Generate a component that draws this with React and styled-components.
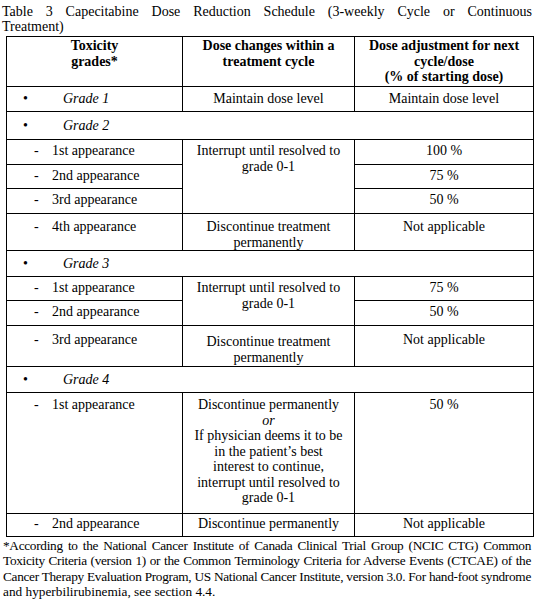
import React from "react";
import styled, { createGlobalStyle } from "styled-components";

const GlobalStyle = createGlobalStyle`
  html, body {
    margin: 0;
    padding: 0;
    background: #fff;
  }
  body {
    font-family: "Liberation Serif", "Times New Roman", serif;
    font-size: 14px;
    color: #000;
  }
`;

const Page = styled.div`
  width: 530px;
  padding: 4px 2px 0 2px;
  font-family: "Liberation Serif", "Times New Roman", serif;
`;

const Caption = styled.div`
  margin: 0 0 2px 0;
  line-height: 15px;
`;

/* one printed line of a justified paragraph, broken where the source breaks */
const Line = styled.span`
  display: block;
  white-space: nowrap;
  text-align: ${(p) => (p.$last ? "left" : "justify")};
  text-align-last: ${(p) => (p.$last ? "left" : "justify")};
`;

const NoteLine = styled(Line)`
  letter-spacing: ${(p) => (p.$last ? 0 : -0.3)}px;
  word-spacing: ${(p) => (p.$last ? 0 : -1.5)}px;
`;

const Table = styled.table`
  margin-left: 4px;
  width: 527px;
  border-collapse: collapse;
  table-layout: fixed;
  font: inherit;
`;

const Row = styled.tr`
  height: ${(p) => p.$h}px;
`;

const HeadCell = styled.th`
  border: 1px solid #000;
  padding: 1px 4px 0 4px;
  font-weight: 700;
  line-height: 15.7px;
  text-align: center;
  vertical-align: top;
`;

const Cell = styled.td`
  border: 1px solid #000;
  padding: ${(p) => (p.$mid ? 0 : p.$pt ?? 3)}px 4px 0 4px;
  line-height: ${(p) => p.$lh || 15.5}px;
  text-align: ${(p) => (p.$left ? "left" : "center")};
  vertical-align: ${(p) => (p.$mid ? "middle" : "top")};
  overflow: hidden;
`;

const Bullet = styled.span`
  display: inline-block;
  width: 40px;
  margin-left: 12px;
`;

const GradeLabel = styled.span`
  font-style: italic;
`;

const Dash = styled.span`
  display: inline-block;
  width: 18px;
  margin-left: 23px;
`;

const Or = styled.div`
  font-style: italic;
`;

const Footnote = styled.div`
  margin: 1px 0 0 1px;
  width: 528px;
  font-size: 13.3px;
  line-height: 15.4px;
`;

function GradeRow({ label, h }) {
  return (
    <Row $h={h}>
      <Cell colSpan={3} $left $mid>
        <Bullet>•</Bullet>
        <GradeLabel>{label}</GradeLabel>
      </Cell>
    </Row>
  );
}

function Appear({ children }) {
  return (
    <>
      <Dash>-</Dash>
      {children}
    </>
  );
}

export default function App() {
  return (
    <Page>
      <GlobalStyle />
      <Caption>
        <Line>Table 3 Capecitabine Dose Reduction Schedule (3-weekly Cycle or Continuous</Line>
        <Line $last>Treatment)</Line>
      </Caption>
      <Table>
        <colgroup>
          <col style={{ width: 176 }} />
          <col style={{ width: 172 }} />
          <col style={{ width: 179 }} />
        </colgroup>
        <thead>
          <Row $h={50}>
            <HeadCell>
              Toxicity
              <br />
              grades*
            </HeadCell>
            <HeadCell>
              Dose changes within a
              <br />
              treatment cycle
            </HeadCell>
            <HeadCell>
              Dose adjustment for next
              <br />
              cycle/dose
              <br />
              (% of starting dose)
            </HeadCell>
          </Row>
        </thead>
        <tbody>
          <Row $h={25}>
            <Cell $left $mid>
              <Bullet>•</Bullet>
              <GradeLabel>Grade 1</GradeLabel>
            </Cell>
            <Cell $mid>Maintain dose level</Cell>
            <Cell $mid>Maintain dose level</Cell>
          </Row>

          <GradeRow label="Grade 2" h={28} />
          <Row $h={25}>
            <Cell $left>
              <Appear>1st appearance</Appear>
            </Cell>
            <Cell rowSpan={3}>
              Interrupt until resolved to
              <br />
              grade 0-1
            </Cell>
            <Cell>100 %</Cell>
          </Row>
          <Row $h={24}>
            <Cell $left>
              <Appear>2nd appearance</Appear>
            </Cell>
            <Cell>75 %</Cell>
          </Row>
          <Row $h={25}>
            <Cell $left>
              <Appear>3rd appearance</Appear>
            </Cell>
            <Cell>50 %</Cell>
          </Row>
          <Row $h={37}>
            <Cell $left $pt={5}>
              <Appear>4th appearance</Appear>
            </Cell>
            <Cell $pt={5}>
              Discontinue treatment
              <br />
              permanently
            </Cell>
            <Cell $pt={5}>Not applicable</Cell>
          </Row>

          <GradeRow label="Grade 3" h={26} />
          <Row $h={24}>
            <Cell $left>
              <Appear>1st appearance</Appear>
            </Cell>
            <Cell rowSpan={2}>
              Interrupt until resolved to
              <br />
              grade 0-1
            </Cell>
            <Cell>75 %</Cell>
          </Row>
          <Row $h={25}>
            <Cell $left>
              <Appear>2nd appearance</Appear>
            </Cell>
            <Cell>50 %</Cell>
          </Row>
          <Row $h={41}>
            <Cell $left $pt={6}>
              <Appear>3rd appearance</Appear>
            </Cell>
            <Cell $pt={8} $lh={16}>
              Discontinue treatment
              <br />
              permanently
            </Cell>
            <Cell $pt={6}>Not applicable</Cell>
          </Row>

          <GradeRow label="Grade 4" h={26} />
          <Row $h={121}>
            <Cell $left $pt={4}>
              <Appear>1st appearance</Appear>
            </Cell>
            <Cell $pt={4}>
              Discontinue permanently
              <Or>or</Or>
              If physician deems it to be
              <br />
              in the patient’s best
              <br />
              interest to continue,
              <br />
              interrupt until resolved to
              <br />
              grade 0-1
            </Cell>
            <Cell $pt={4}>50 %</Cell>
          </Row>
          <Row $h={23}>
            <Cell $left $pt={2}>
              <Appear>2nd appearance</Appear>
            </Cell>
            <Cell $pt={2}>Discontinue permanently</Cell>
            <Cell $pt={2}>Not applicable</Cell>
          </Row>
        </tbody>
      </Table>
      <Footnote>
        <NoteLine>
          *According to the National Cancer Institute of Canada Clinical Trial Group (NCIC CTG) Common
        </NoteLine>
        <NoteLine>
          Toxicity Criteria (version 1) or the Common Terminology Criteria for Adverse Events (CTCAE) of the
        </NoteLine>
        <NoteLine>
          Cancer Therapy Evaluation Program, US National Cancer Institute, version 3.0. For hand-foot syndrome
        </NoteLine>
        <NoteLine $last>and hyperbilirubinemia, see section 4.4.</NoteLine>
      </Footnote>
    </Page>
  );
}
